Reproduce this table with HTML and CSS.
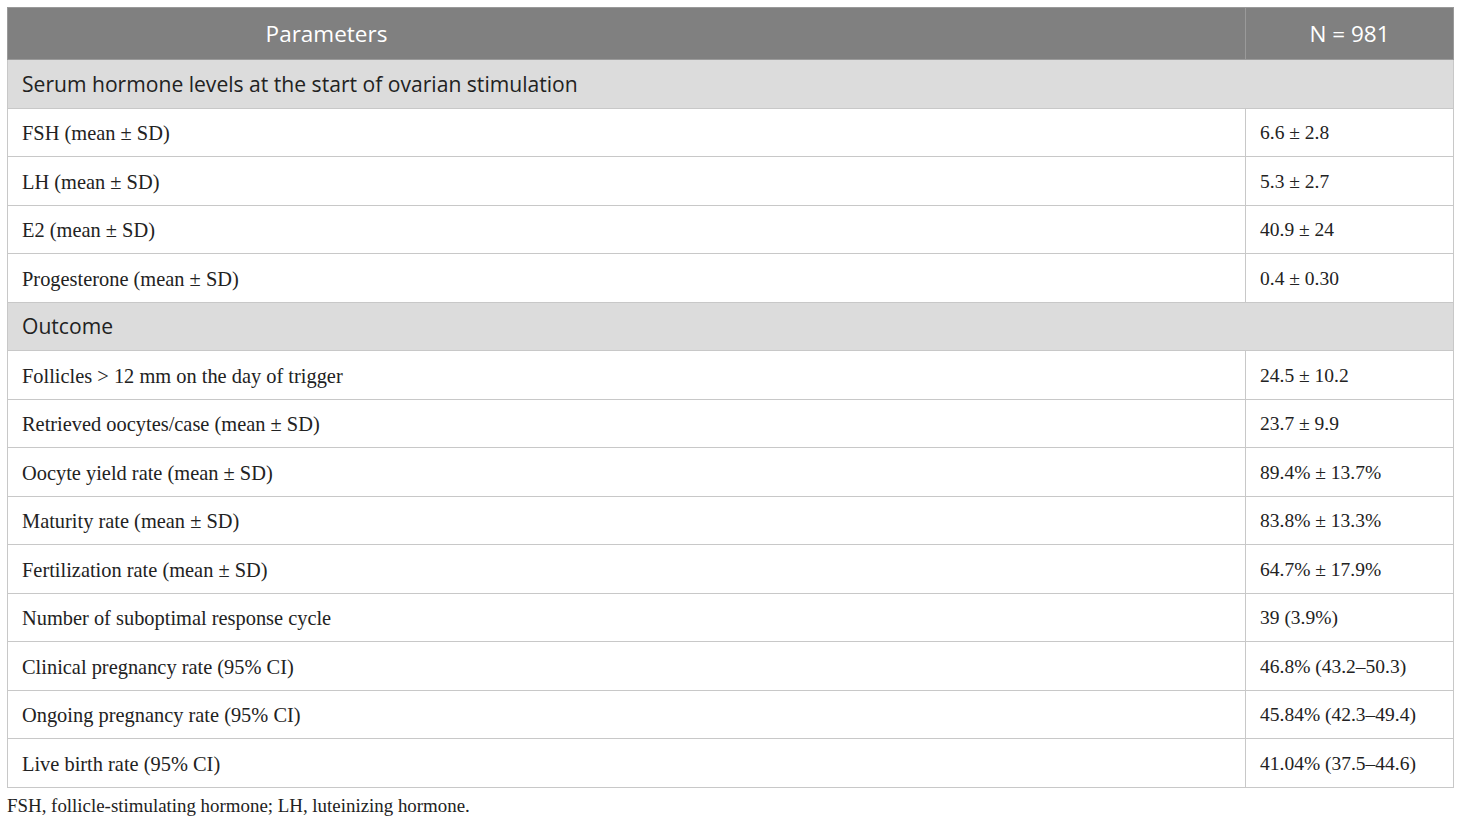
FILE: index.html
```html
<!DOCTYPE html>
<html>
<head>
<meta charset="utf-8">
<link rel="stylesheet" href="styles.css">
</head>
<body>
<div class="page">
<table class="data">
  <colgroup><col class="c1"><col class="c2"></colgroup>
  <thead>
    <tr class="head"><th class="h1">Parameters</th><th>N = 981</th></tr>
  </thead>
  <tbody>
    <tr class="sec"><td colspan="2">Serum hormone levels at the start of ovarian stimulation</td></tr>
    <tr><td>FSH (mean ± SD)</td><td>6.6 ± 2.8</td></tr>
    <tr><td>LH (mean ± SD)</td><td>5.3 ± 2.7</td></tr>
    <tr><td>E2 (mean ± SD)</td><td>40.9 ± 24</td></tr>
    <tr><td>Progesterone (mean ± SD)</td><td>0.4 ± 0.30</td></tr>
    <tr class="sec"><td colspan="2">Outcome</td></tr>
    <tr><td>Follicles &gt; 12 mm on the day of trigger</td><td>24.5 ± 10.2</td></tr>
    <tr><td>Retrieved oocytes/case (mean ± SD)</td><td>23.7 ± 9.9</td></tr>
    <tr><td>Oocyte yield rate (mean ± SD)</td><td>89.4% ± 13.7%</td></tr>
    <tr><td>Maturity rate (mean ± SD)</td><td>83.8% ± 13.3%</td></tr>
    <tr><td>Fertilization rate (mean ± SD)</td><td>64.7% ± 17.9%</td></tr>
    <tr><td>Number of suboptimal response cycle</td><td>39 (3.9%)</td></tr>
    <tr><td>Clinical pregnancy rate (95% CI)</td><td>46.8% (43.2–50.3)</td></tr>
    <tr><td>Ongoing pregnancy rate (95% CI)</td><td>45.84% (42.3–49.4)</td></tr>
    <tr><td>Live birth rate (95% CI)</td><td>41.04% (37.5–44.6)</td></tr>
  </tbody>
</table>
<p class="note">FSH, follicle-stimulating hormone; LH, luteinizing hormone.</p>
</div>
</body>
</html>
```

FILE: styles.css
```css
html, body {
  margin: 0;
  padding: 0;
  background: #ffffff;
}
.page {
  padding: 7px 7px 0 7px;
}
.data {
  width: 1446px;
  border-collapse: collapse;
  table-layout: fixed;
  font-family: "Liberation Serif", "Times New Roman", serif;
  font-size: 20.4px;
  color: #222222;
}
.c1 { width: 1238px; }
.c2 { width: 208px; }
.data th, .data td {
  border: 1px solid #c8c8c8;
  padding: 2px 14px 0 14px;
  text-align: left;
  vertical-align: middle;
  line-height: 22px;
}
.data tbody td + td {
  font-size: 19.5px;
}
.data tbody tr { height: 48.5px; }
.head { height: 52px; }
.head th {
  background: #808080;
  color: #ffffff;
  font-family: "Open Sans", "Noto Sans", sans-serif;
  font-weight: 400;
  font-size: 22.5px;
  text-align: center;
  border-color: #9a9a9a;
  padding: 0 14px;
}
.head th.h1 {
  padding: 0 614px 0 14px;
  border-right-color: #9a9a9a;
}
.sec td {
  background: #dcdcdc;
  font-family: "Open Sans", "Noto Sans", sans-serif;
  font-size: 21.1px;
  color: #222222;
  padding-top: 0;
}
.note {
  margin: 7px 0 0 0;
  font-family: "Liberation Serif", "Times New Roman", serif;
  font-size: 18.9px;
  color: #222222;
}
```
